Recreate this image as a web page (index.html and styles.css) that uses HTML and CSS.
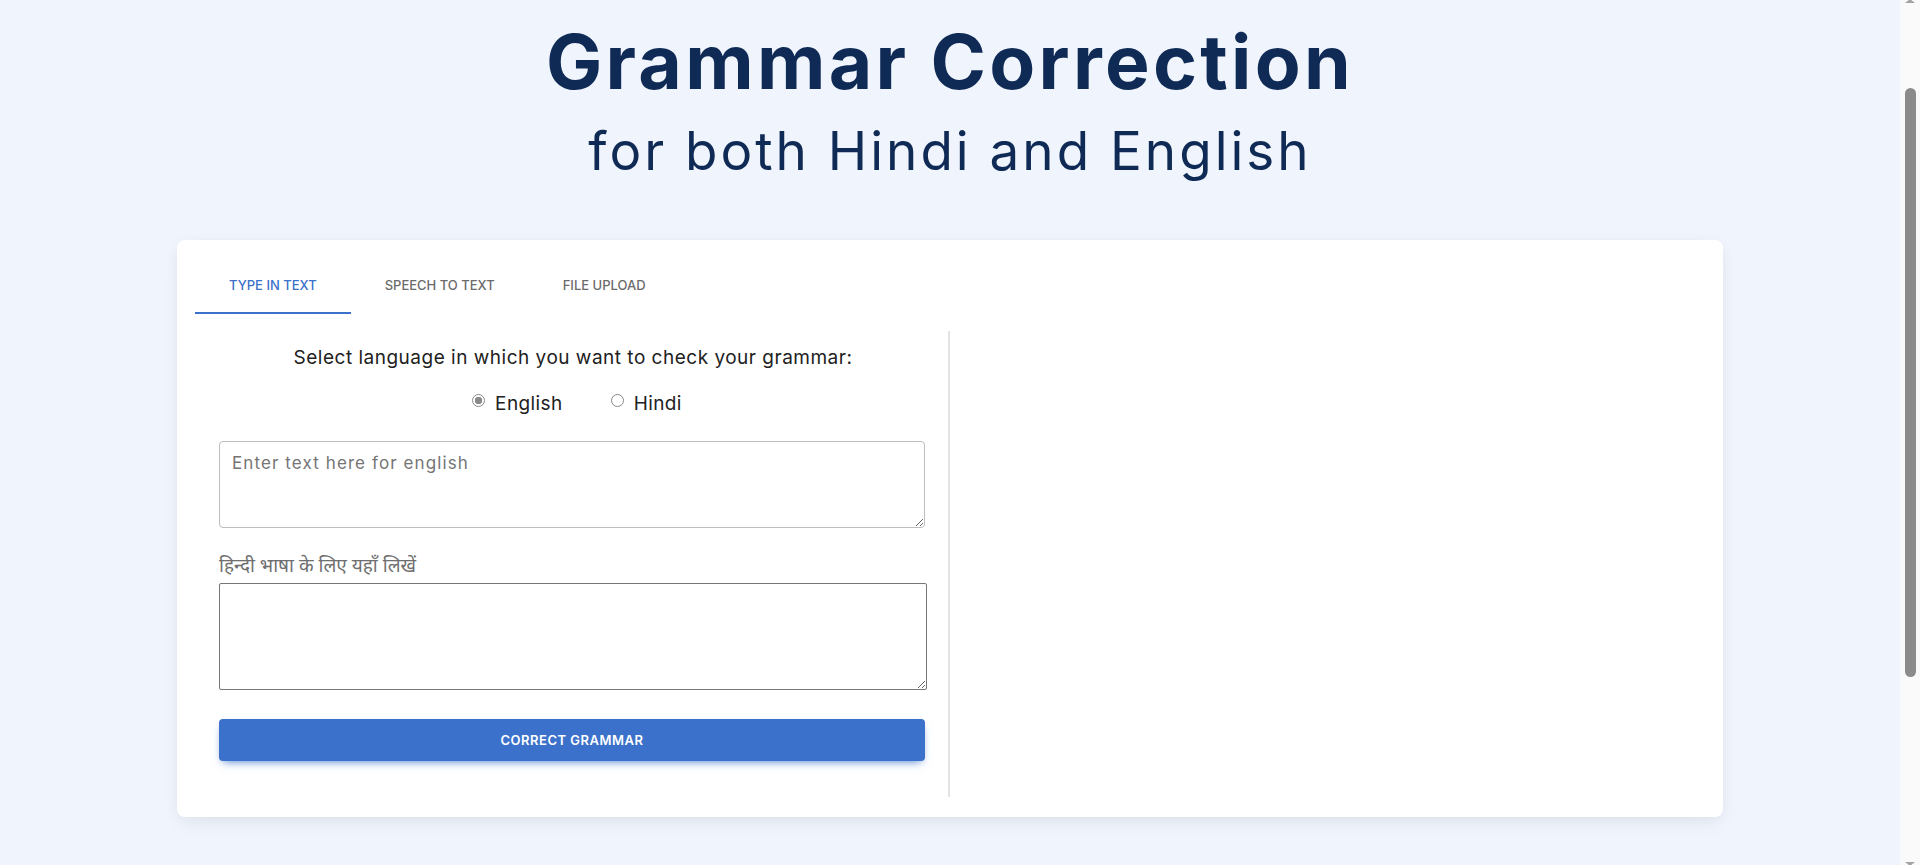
FILE: index.html
```html
<!DOCTYPE html>
<html lang="en">
<head>
<meta charset="utf-8">
<title>Grammar Correction</title>
<link rel="stylesheet" href="styles.css">
</head>
<body>
<div class="viewport">
  <main class="page">
    <header class="hero">
      <h1 class="hero-title">Grammar Correction</h1>
      <h2 class="hero-sub">for both Hindi and English</h2>
    </header>
    <section class="card">
      <nav class="tabs">
        <div class="tab tab-active">Type in text</div>
        <div class="tab">Speech to text</div>
        <div class="tab">File upload</div>
      </nav>
      <div class="panes">
        <div class="pane-left">
          <p class="prompt">Select language in which you want to check your grammar:</p>
          <div class="radios">
            <label class="radio-item"><input type="radio" name="lang" class="radio" checked><span>English</span></label>
            <label class="radio-item"><input type="radio" name="lang" class="radio"><span>Hindi</span></label>
          </div>
          <textarea class="input-en" placeholder="Enter text here for english"></textarea>
          <div class="hindi-label">हिन्दी भाषा के लिए यहाँ लिखें</div>
          <textarea class="input-hi"></textarea>
          <button class="btn-correct" type="button">Correct Grammar</button>
        </div>
        <div class="pane-right"></div>
      </div>
    </section>
  </main>
  <aside class="scrollbar">
    <div class="sb-arrow sb-up"></div>
    <div class="sb-thumb"></div>
    <div class="sb-arrow sb-down"></div>
  </aside>
</div>
</body>
</html>
```

FILE: styles.css
```css
html, body {
  margin: 0;
  padding: 0;
  height: 865px;
  overflow: hidden;
}

body {
  background: #eff4fd;
  font-family: "Inter", "Noto Sans", sans-serif;
  color: #212121;
}

.viewport {
  display: flex;
  height: 865px;
}

.page {
  width: 1900px;
  flex: 0 0 1900px;
}

.hero {
  padding-top: 24px;
  text-align: center;
  color: #0f2a55;
}

.hero-title {
  margin: 0;
  font-size: 75px;
  line-height: 1;
  font-weight: 700;
  letter-spacing: 3.3px;
}

.hero-sub {
  margin: 26px 0 0;
  font-size: 53px;
  line-height: 1;
  font-weight: 400;
  letter-spacing: 3px;
}

.card {
  margin: 62px 0 0 177px;
  width: 1546px;
  height: 577px;
  box-sizing: border-box;
  background: #fff;
  border-radius: 8px;
  box-shadow: 0 2px 15px -3px rgba(0, 0, 0, 0.07), 0 10px 20px -2px rgba(0, 0, 0, 0.04);
  padding: 18px 18px 20px;
}

.tabs {
  display: flex;
}

.tab {
  height: 54px;
  padding: 0 34px;
  display: flex;
  align-items: center;
  font-size: 13px;
  font-weight: 500;
  text-transform: uppercase;
  color: #6b6b6b;
  border-bottom: 2px solid transparent;
}

.tab-active {
  color: #3b71ca;
  border-bottom-color: #3b71ca;
}

.panes {
  display: grid;
  grid-template-columns: 755px 1fr;
  margin-top: 17px;
  height: 466px;
}

.pane-left {
  border-right: 2px solid #e3e3e3;
  padding: 0 21px 0 24px;
  display: flex;
  flex-direction: column;
}

.prompt {
  margin: 13px 0 0;
  font-size: 19px;
  line-height: 27px;
  letter-spacing: 0.5px;
  text-align: center;
}

.radios {
  margin-top: 19px;
  display: flex;
  justify-content: center;
  gap: 48px;
  height: 27px;
  padding-left: 8px;
}

.radio-item {
  display: inline-flex;
  align-items: center;
  gap: 10px;
  font-size: 19px;
  line-height: 27px;
  letter-spacing: 0.4px;
}

.radio {
  appearance: none;
  -webkit-appearance: none;
  margin: 0;
  width: 13px;
  height: 13px;
  border: 1px solid #8a8a8a;
  border-radius: 50%;
  background: #fff;
  box-sizing: border-box;
  position: relative;
  top: -3px;
}

.radio:checked {
  background: radial-gradient(circle, #8a8a8a 0 3.5px, #fff 4px);
}

.input-en {
  margin-top: 24px;
  width: calc(100% - 2px);
  height: 87px;
  box-sizing: border-box;
  border: 1px solid #bdbdbd;
  border-radius: 4px;
  padding: 9px 12px;
  font-family: inherit;
  font-size: 17px;
  line-height: 24px;
  letter-spacing: 1.1px;
  color: #212121;
  resize: vertical;
}

.input-en::placeholder {
  color: #757575;
}

.hindi-label {
  margin-top: 28px;
  font-size: 19px;
  line-height: 24px;
  color: #6f6f6f;
  font-family: "Noto Sans Devanagari", "Noto Sans", sans-serif;
}

.input-hi {
  margin-top: 3px;
  width: 100%;
  height: 107px;
  box-sizing: border-box;
  border: 1px solid #767676;
  border-radius: 2px;
  padding: 2px;
  font-family: inherit;
  font-size: 16px;
  resize: vertical;
}

.btn-correct {
  margin-top: 29px;
  width: calc(100% - 2px);
  height: 42px;
  border: 0;
  border-radius: 4px;
  background: #3b71ca;
  color: #fff;
  font-family: inherit;
  font-size: 13px;
  font-weight: 600;
  letter-spacing: 0.5px;
  text-transform: uppercase;
  box-shadow: 0 4px 9px -4px #3b71ca;
}

.scrollbar {
  flex: 0 0 20px;
  width: 20px;
  background: #fafafa;
  display: flex;
  flex-direction: column;
  align-items: center;
}

.sb-arrow {
  width: 0;
  height: 0;
  border-left: 5px solid transparent;
  border-right: 5px solid transparent;
}

.sb-up {
  border-bottom: 4px solid #a3a3a3;
  margin-top: -1px;
}

.sb-thumb {
  margin-top: 85px;
  width: 11px;
  height: 589px;
  border-radius: 6px;
  background: #8b8b8b;
}

.sb-down {
  margin-top: auto;
  border-top: 4px solid #a3a3a3;
  transform: translateY(1px);
}
```
